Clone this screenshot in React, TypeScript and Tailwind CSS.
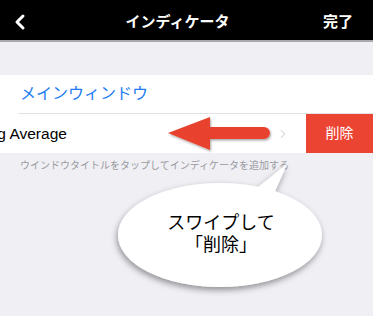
import { ChevronLeft, ChevronRight } from 'lucide-react'

const font = 'font-["Liberation_Sans","Noto_Sans_CJK_JP",sans-serif]'

export default function App() {
  return (
    <div className={`relative h-[316px] w-[373px] overflow-hidden bg-[#efeff4] ${font}`}>
      <NavBar />
      <div className="h-[33px]" />
      <section className="bg-white">
        <div className="flex h-[38px] items-center pl-[20px] text-[16px] text-[#1f7cf2]">メインウィンドウ</div>
        <div className="ml-[18px] h-px bg-[#e2e2e6]" />
        <div className="flex h-[39px] items-center">
          <div className="flex min-w-0 flex-1 items-center overflow-hidden">
            <span className="ml-[-44px] whitespace-nowrap text-[15.5px] text-black">Moving Average</span>
            <ChevronRight className="ml-auto mr-[16px] h-[14px] w-[14px] text-[#c4c4c8]" strokeWidth={1.6} />
          </div>
          <button
            type="button"
            className="flex h-full w-[67px] items-center justify-center bg-[#ec4433] text-[14px] text-white"
          >
            削除
          </button>
        </div>
      </section>
      <p className="mt-[7px] pl-[20px] text-[10px] leading-[12px] text-[#9a9a9f]">
        ウインドウタイトルをタップしてインディケータを追加する
      </p>
      <SwipeHint />
    </div>
  )
}

function NavBar() {
  return (
    <header className="flex h-[42px] items-center border-b-2 border-[#a9a9ad] bg-black px-[8px] pt-[4px] text-white">
      <ChevronLeft className="h-[24px] w-[24px]" strokeWidth={3} />
      <h1 className="flex-1 text-center text-[15px] font-bold">インディケータ</h1>
      <span className="pr-[12px] text-[15px] font-bold">完了</span>
    </header>
  )
}

// annotation overlay: red arrow over the row + speech bubble
function SwipeHint() {
  return (
    <div className="pointer-events-none absolute inset-0">
      <svg viewBox="0 0 373 316" className="absolute inset-0 h-full w-full">
        <defs>
          <filter id="sh" x="-20%" y="-20%" width="140%" height="160%">
            <feDropShadow dx="-1" dy="3" stdDeviation="3" floodColor="#000" floodOpacity="0.4" />
          </filter>
          <filter id="ash" x="-10%" y="-20%" width="120%" height="160%">
            <feDropShadow dx="1" dy="1.5" stdDeviation="1" floodColor="#000" floodOpacity="0.35" />
          </filter>
        </defs>
        <g filter="url(#ash)">
          <path d="M168 133 L210 117 L210 127 L264 127 A6 6 0 0 1 264 139 L210 139 L210 150 Z" fill="#e8432f" />
        </g>
        <g filter="url(#sh)">
          <path d="M252 192 L287 164 L273 196 Z" fill="#fff" />
          <ellipse cx="220" cy="235" rx="102" ry="52" fill="#fff" />
        </g>
        <path d="M250 195 L287 164 L271 199 Z" fill="#fff" />
      </svg>
      <div className="absolute left-[120px] top-[212px] w-[202px] text-center text-[18px] leading-[22px] text-black">
        スワイプして
        <br />
        「削除」
      </div>
    </div>
  )
}
